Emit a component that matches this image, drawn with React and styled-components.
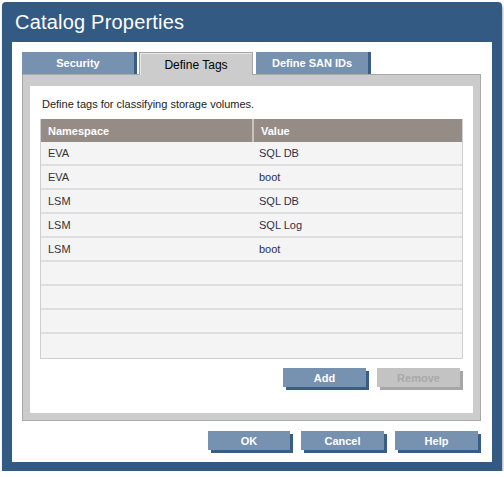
import styled, { createGlobalStyle } from 'styled-components';

const GlobalStyle = createGlobalStyle`
  html, body {
    margin: 0;
    padding: 0;
    background: #ffffff;
  }
  body {
    font-family: 'Liberation Sans', Arial, sans-serif;
    font-size: 11px;
  }
`;

const Dialog = styled.div`
  margin: 2px 2px 0 2px;
  width: 500px;
  height: 469px;
  background: #335a83;
  border-radius: 4px 4px 0 0;
  box-shadow: 1px 3px 3px rgba(0, 0, 0, 0.35);
  display: flex;
  flex-direction: column;
`;

const TitleBar = styled.div`
  height: 40px;
  display: flex;
  align-items: center;
  padding-left: 13px;
  color: #ffffff;
  font-size: 20px;
  letter-spacing: 0.2px;
`;

const Body = styled.div`
  margin: 0 10px 9px 10px;
  flex: 1;
  background: #ffffff;
  padding: 10px 11px 9px 10px;
  display: flex;
  flex-direction: column;
`;

const Tabs = styled.div`
  display: flex;
  height: 22px;
  position: relative;
  z-index: 1;
`;

const Tab = styled.div`
  box-sizing: border-box;
  width: ${({ active }) => (active ? '114px' : '112px')};
  margin-left: ${({ gap }) => gap || 0}px;
  height: ${({ active }) => (active ? '23px' : '22px')};
  display: flex;
  align-items: center;
  justify-content: center;
  background: ${({ active }) => (active ? '#cccccc' : '#7692b0')};
  color: ${({ active }) => (active ? '#000000' : '#ffffff')};
  font-weight: ${({ active }) => (active ? 'normal' : 'bold')};
  font-size: ${({ active }) => (active ? '12px' : '11px')};
  border: ${({ active }) => (active ? '1px solid #a4a4a4' : 'none')};
  border-bottom: none;
  box-shadow: ${({ active }) => (active ? 'inset 1px 1px 0 #e8e8e8' : '3px 0 0 #3a5d85')};
  padding-top: ${({ active }) => (active ? '1px' : '0')};
`;

const Panel = styled.div`
  height: 347px;
  box-sizing: border-box;
  border: 1px solid #a8a8a8;
  background: #cccccc;
  padding: 11px 7px 7px 7px;
  display: flex;
`;

const PanelInner = styled.div`
  flex: 1;
  background: #ffffff;
  padding: 11px 10px 0 10px;
  display: flex;
  flex-direction: column;
`;

const Intro = styled.div`
  color: #222222;
  font-size: 11px;
  line-height: 14px;
  padding-left: 2px;
  margin-bottom: 8px;
`;

const Table = styled.div`
  border: 1px solid #cfcfcf;
  border-top: none;
`;

const Row = styled.div`
  display: grid;
  grid-template-columns: 211px 1fr;
  height: ${({ header }) => (header ? '23px' : '24px')};
  box-sizing: border-box;
  background: ${({ header }) => (header ? '#968c86' : '#f4f4f4')};
  border-bottom: ${({ header, last }) => (header || last ? 'none' : '2px solid #dedede')};
`;

const Cell = styled.div`
  display: flex;
  align-items: center;
  padding-left: ${({ second }) => (second ? '7px' : '7px')};
  color: ${({ header, second }) => (header ? '#ffffff' : second ? '#2e2e4c' : '#333333')};
  font-weight: ${({ header }) => (header ? 'bold' : 'normal')};
  border-left: ${({ header, second }) => (header && second ? '2px solid #c9c2bd' : 'none')};
`;

const ButtonRow = styled.div`
  display: flex;
  justify-content: flex-end;
  gap: 8px;
  margin-top: ${({ top }) => top}px;
  padding-right: ${({ right }) => right || 0}px;
`;

const Button = styled.div`
  width: ${({ w }) => w || 83}px;
  height: 19px;
  margin-right: 3px;
  margin-bottom: 3px;
  display: flex;
  align-items: center;
  justify-content: center;
  font-weight: bold;
  font-size: 11px;
  color: ${({ disabled }) => (disabled ? '#a9a9a9' : '#ffffff')};
  background: ${({ disabled }) => (disabled ? '#c3c3c3' : '#7692b0')};
  box-shadow: 3px 3px 0 ${({ disabled }) => (disabled ? '#a6a6a6' : '#3a5d85')};
`;

const rows = [
  ['EVA', 'SQL DB'],
  ['EVA', 'boot'],
  ['LSM', 'SQL DB'],
  ['LSM', 'SQL Log'],
  ['LSM', 'boot'],
  ['', ''],
  ['', ''],
  ['', ''],
  ['', ''],
];

export default function App() {
  return (
    <>
      <GlobalStyle />
      <Dialog>
        <TitleBar>Catalog Properties</TitleBar>
        <Body>
          <Tabs>
            <Tab>Security</Tab>
            <Tab active gap={5}>Define Tags</Tab>
            <Tab gap={3}>Define SAN IDs</Tab>
          </Tabs>
          <Panel>
            <PanelInner>
              <Intro>Define tags for classifying storage volumes.</Intro>
              <Table>
                <Row header>
                  <Cell header>Namespace</Cell>
                  <Cell header second>Value</Cell>
                </Row>
                {rows.map(([ns, val], i) => (
                  <Row key={i} last={i === rows.length - 1}>
                    <Cell>{ns}</Cell>
                    <Cell second>{val}</Cell>
                  </Row>
                ))}
              </Table>
              <ButtonRow top={9}>
                <Button>Add</Button>
                <Button disabled>Remove</Button>
              </ButtonRow>
            </PanelInner>
          </Panel>
          <ButtonRow top={10} right={0}>
            <Button w={82}>OK</Button>
            <Button w={83}>Cancel</Button>
            <Button w={83}>Help</Button>
          </ButtonRow>
        </Body>
      </Dialog>
    </>
  );
}
